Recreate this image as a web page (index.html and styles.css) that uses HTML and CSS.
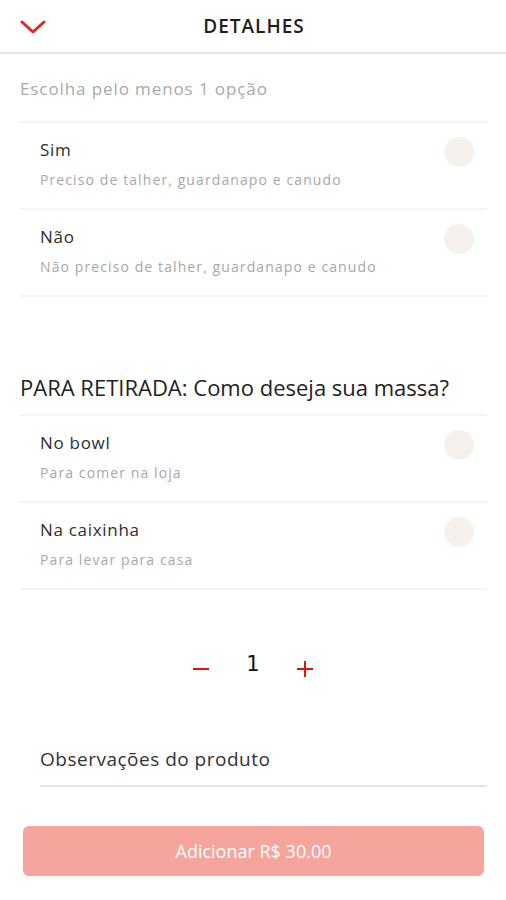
FILE: index.html
```html
<!DOCTYPE html>
<html lang="pt-BR">
<head>
    <meta charset="UTF-8">
    <meta name="viewport" content="width=device-width, initial-scale=1.0">
    <title>Detalhes</title>
    <link rel="stylesheet" href="styles.css">
</head>
<body>
    <!-- Header -->
    <header class="topbar">
        <button class="back-button" aria-label="Voltar">
            <svg width="26" height="14" viewBox="0 0 26 14">
                <path d="M2 2 L13 12 L24 2" fill="none" stroke="#e5261c" stroke-width="3" stroke-linecap="round" stroke-linejoin="round"/>
            </svg>
        </button>
        <h1 class="title">DETALHES</h1>
    </header>

    <!-- Option group 1 -->
    <section class="group">
        <p class="hint">Escolha pelo menos 1 opção</p>
        <div class="option">
            <div class="option-text">
                <div class="option-name">Sim</div>
                <div class="option-desc">Preciso de talher, guardanapo e canudo</div>
            </div>
            <span class="radio"></span>
        </div>
        <div class="option">
            <div class="option-text">
                <div class="option-name">Não</div>
                <div class="option-desc">Não preciso de talher, guardanapo e canudo</div>
            </div>
            <span class="radio"></span>
        </div>
    </section>

    <!-- Option group 2 -->
    <section class="group group-second">
        <h2 class="group-title">PARA RETIRADA: Como deseja sua massa?</h2>
        <div class="option">
            <div class="option-text">
                <div class="option-name">No bowl</div>
                <div class="option-desc">Para comer na loja</div>
            </div>
            <span class="radio"></span>
        </div>
        <div class="option">
            <div class="option-text">
                <div class="option-name">Na caixinha</div>
                <div class="option-desc">Para levar para casa</div>
            </div>
            <span class="radio"></span>
        </div>
    </section>

    <!-- Quantity -->
    <div class="quantity">
        <button class="qty-button">
            <svg width="18" height="18" viewBox="0 0 18 18"><path d="M1 9 H17" stroke="#e3120b" stroke-width="2"/></svg>
        </button>
        <span class="qty-value">1</span>
        <button class="qty-button">
            <svg width="18" height="18" viewBox="0 0 18 18"><path d="M1 9 H17 M9 1 V17" stroke="#e3120b" stroke-width="2"/></svg>
        </button>
    </div>

    <!-- Notes -->
    <div class="notes">Observações do produto</div>

    <button class="add-button">Adicionar R$ 30.00</button>
</body>
</html>
```

FILE: styles.css
```css
body {
    font-family: "Open Sans", Lato, sans-serif;
    margin: 0;
    background-color: #fff;
    color: #2b2b2b;
}
button {
    font-family: inherit;
    border: none;
    background: none;
    padding: 0;
    cursor: pointer;
}
.topbar {
    height: 52px;
    border-bottom: 2px solid #e6e6e6;
    display: flex;
    align-items: center;
    justify-content: center;
    position: relative;
}
.back-button {
    position: absolute;
    left: 20px;
    top: 20px;
    display: flex;
}
.title {
    margin: 0 0 0 2px;
    font-size: 19px;
    font-weight: 600;
    color: #1e1e1e;
    letter-spacing: 1px;
}
.group {
    padding: 0 19px 0 20px;
}
.hint {
    margin: 0;
    height: 67px;
    line-height: 70px;
    font-size: 17px;
    letter-spacing: 0.9px;
    color: #a9a9a9;
    border-bottom: 2px solid #f4f4f4;
}
.option {
    height: 85px;
    border-bottom: 2px solid #f4f4f4;
    display: flex;
    justify-content: space-between;
    padding: 0 13px 0 20px;
}
.option-text {
    padding-top: 16px;
}
.option-name {
    font-size: 17px;
    color: #2e2e2e;
    line-height: 22px;
    letter-spacing: 0.7px;
}
.option-desc {
    font-size: 14px;
    color: #a8a8a8;
    margin-top: 10px;
    line-height: 18px;
    letter-spacing: 1.1px;
}
.radio {
    width: 30px;
    height: 30px;
    border-radius: 50%;
    background-color: #f6f1ed;
    margin-top: 14px;
}
.group-second {
    margin-top: 68px;
}
.group-title {
    margin: 0;
    font-size: 22px;
    font-weight: 400;
    color: #222;
    height: 49px;
    line-height: 45px;
    border-bottom: 2px solid #f4f4f4;
}
.quantity {
    display: flex;
    justify-content: center;
    align-items: center;
    gap: 36px;
    margin-top: 54px;
    height: 40px;
}
.qty-button {
    display: flex;
    margin-top: 10px;
}
.qty-value {
    font-family: "DejaVu Sans", sans-serif;
    font-size: 21px;
    color: #111;
}
.notes {
    margin: 62px 19px 0 40px;
    font-size: 19px;
    letter-spacing: 0.5px;
    color: #333;
    padding-bottom: 13px;
    border-bottom: 2px solid #e4e4e4;
}
.add-button {
    display: block;
    margin: 39px 22px 0 23px;
    width: calc(100% - 45px);
    height: 50px;
    border-radius: 6px;
    background-color: #f5a59c;
    color: #fff;
    font-size: 18px;
}
```
